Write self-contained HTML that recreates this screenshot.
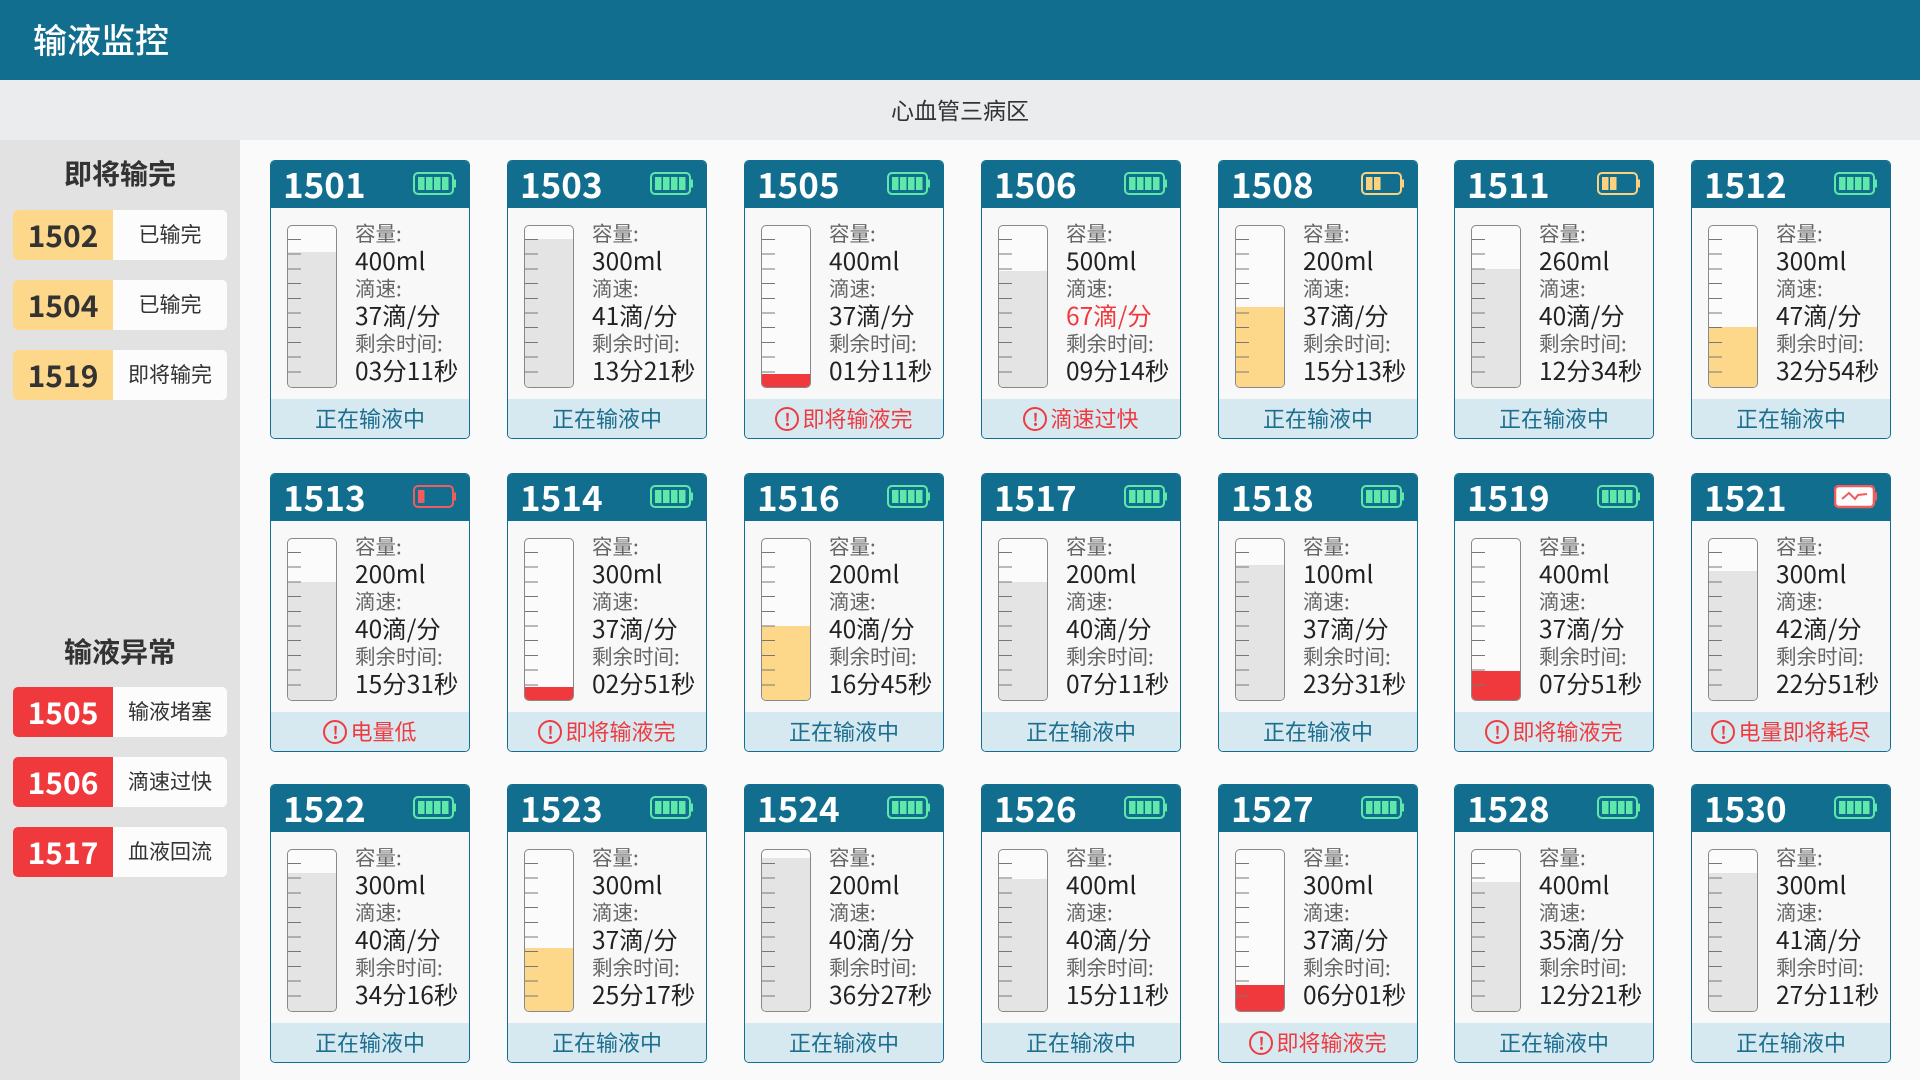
<!DOCTYPE html>
<html><head><meta charset="utf-8"><style>
*{margin:0;padding:0;box-sizing:border-box}
body{width:1920px;height:1080px;overflow:hidden;background:#fafafa;font-family:"Noto Sans CJK SC","Liberation Sans",sans-serif;position:relative}
.top{position:absolute;left:0;top:0;width:1920px;height:80px;background:#126e8f;color:#fff;font-size:34px;line-height:78px;padding-left:33px;font-weight:500}
.sub{position:absolute;left:0;top:80px;width:1920px;height:60px;background:#ebecee;color:#333;font-size:23px;line-height:58px;text-align:center}
.side{position:absolute;left:0;top:140px;width:240px;height:940px;background:#e2e2e2}
.st{position:absolute;left:0;width:240px;text-align:center;font-size:28px;font-weight:bold;color:#333;line-height:40px}
.p{position:absolute;left:13px;width:214px;height:50px;background:#fcfcfc;border-radius:5px;overflow:hidden;font-size:21px;color:#333}
.p b{position:absolute;left:0;top:0;width:100px;height:50px;line-height:48px;text-align:center;font-size:30px}
.p span{position:absolute;left:100px;top:0;width:114px;height:50px;line-height:48px;text-align:center}
.y b{background:#fdd88a;color:#333}.r b{background:#f0393d;color:#fff}
.c{position:absolute;width:200px;height:279px;border:1.5px solid #126e8f;border-radius:5px;background:#f8f8f8;overflow:hidden}
.h{position:absolute;left:0;top:0;width:100%;height:47px;background:#126e8f;color:#fff;font-size:35px;font-weight:bold;line-height:45px;padding-left:12px}
.h svg{position:absolute;left:142px;top:11px}
.t{position:absolute;left:16px;top:64px;width:50px;height:163px;border:1.5px solid #888;border-radius:5px;background:#fbfbfb;overflow:hidden}
.f{position:absolute;left:0;bottom:0;width:100%}
.g{background:#e4e4e4}.yy{background:#fdd88a}.rr{background:#f0393d}
.k{position:absolute;left:0;top:13px;width:13px;height:135px;background:repeating-linear-gradient(to bottom,#777 0,#777 1px,transparent 1px,transparent 14.7px)}
.i{position:absolute;left:84px;top:58px;width:116px}
.i div{height:27.5px;line-height:27.5px;white-space:nowrap}
.l{font-size:20.5px;color:#666}
.v{font-size:24.5px;color:#222}
.v.red{color:#f0393d}
.ft{position:absolute;left:0;bottom:0;width:100%;height:39px;background:#d6e8f0;color:#1b6e8e;font-size:22px;line-height:37px;text-align:center;display:flex;align-items:center;justify-content:center}
.ft.a{color:#ef3b3f}
.ft.a i{display:inline-block;width:24px;height:24px;border:2.5px solid #ef3b3f;border-radius:50%;font-style:normal;font-size:17px;line-height:19px;font-weight:bold;margin-right:3px;text-align:center}
</style></head><body>
<div class="top">输液监控</div>
<div class="sub">心血管三病区</div>
<div class="side">
<div class="st" style="top:13px">即将输完</div>
<div class="p y" style="top:70px"><b>1502</b><span>已输完</span></div>
<div class="p y" style="top:140px"><b>1504</b><span>已输完</span></div>
<div class="p y" style="top:210px"><b>1519</b><span>即将输完</span></div>
<div class="st" style="top:491px">输液异常</div>
<div class="p r" style="top:547px"><b>1505</b><span>输液堵塞</span></div>
<div class="p r" style="top:617px"><b>1506</b><span>滴速过快</span></div>
<div class="p r" style="top:687px"><b>1517</b><span>血液回流</span></div>
</div>

<svg width="0" height="0" style="position:absolute"><defs>
<g id="bg"><rect x="1" y="1" width="39" height="21" rx="4" fill="none" stroke="#5fe9a9" stroke-width="2"/><rect x="40" y="7.5" width="3" height="8" fill="#5fe9a9"/><rect x="5" y="5" width="6.5" height="13" fill="#5fe9a9"/><rect x="13" y="5" width="6.5" height="13" fill="#5fe9a9"/><rect x="21" y="5" width="6.5" height="13" fill="#5fe9a9"/><rect x="29" y="5" width="6.5" height="13" fill="#5fe9a9"/></g>
<g id="by"><rect x="1" y="1" width="39" height="21" rx="4" fill="none" stroke="#fdd27e" stroke-width="2"/><rect x="40" y="7.5" width="3" height="8" fill="#fdd27e"/><rect x="5" y="5" width="6.5" height="13" fill="#fdd27e"/><rect x="13" y="5" width="6.5" height="13" fill="#fdd27e"/></g>
<g id="br"><rect x="1" y="1" width="39" height="21" rx="4" fill="none" stroke="#f25c5c" stroke-width="2"/><rect x="40" y="7.5" width="3" height="8" fill="#f25c5c"/><rect x="5" y="5" width="6.5" height="13" fill="#f25c5c"/></g>
<g id="bw"><rect x="1" y="1" width="39" height="21" rx="4" fill="#fff" stroke="#f25c5c" stroke-width="2.5"/><rect x="40" y="7.5" width="3" height="8" fill="#f25c5c"/><polyline points="8,14 15,8 21,14 24,10 33,9" fill="none" stroke="#f25c5c" stroke-width="2"/></g>
</defs></svg>

<!-- Row 1 -->
<div class="c" style="left:270px;top:160px"><div class="h">1501<svg width="44" height="24"><use href="#bg"/></svg></div><div class="t"><div class="f g" style="height:84%"></div><div class="k"></div></div><div class="i"><div class="l">容量:</div><div class="v">400ml</div><div class="l">滴速:</div><div class="v">37滴/分</div><div class="l">剩余时间:</div><div class="v">03分11秒</div></div><div class="ft">正在输液中</div></div>
<div class="c" style="left:507px;top:160px"><div class="h">1503<svg width="44" height="24"><use href="#bg"/></svg></div><div class="t"><div class="f g" style="height:92%"></div><div class="k"></div></div><div class="i"><div class="l">容量:</div><div class="v">300ml</div><div class="l">滴速:</div><div class="v">41滴/分</div><div class="l">剩余时间:</div><div class="v">13分21秒</div></div><div class="ft">正在输液中</div></div>
<div class="c" style="left:744px;top:160px"><div class="h">1505<svg width="44" height="24"><use href="#bg"/></svg></div><div class="t"><div class="f rr" style="height:8%"></div><div class="k"></div></div><div class="i"><div class="l">容量:</div><div class="v">400ml</div><div class="l">滴速:</div><div class="v">37滴/分</div><div class="l">剩余时间:</div><div class="v">01分11秒</div></div><div class="ft a"><i>!</i>即将输液完</div></div>
<div class="c" style="left:981px;top:160px"><div class="h">1506<svg width="44" height="24"><use href="#bg"/></svg></div><div class="t"><div class="f g" style="height:72%"></div><div class="k"></div></div><div class="i"><div class="l">容量:</div><div class="v">500ml</div><div class="l">滴速:</div><div class="v red">67滴/分</div><div class="l">剩余时间:</div><div class="v">09分14秒</div></div><div class="ft a"><i>!</i>滴速过快</div></div>
<div class="c" style="left:1218px;top:160px"><div class="h">1508<svg width="44" height="24"><use href="#by"/></svg></div><div class="t"><div class="f yy" style="height:50%"></div><div class="k"></div></div><div class="i"><div class="l">容量:</div><div class="v">200ml</div><div class="l">滴速:</div><div class="v">37滴/分</div><div class="l">剩余时间:</div><div class="v">15分13秒</div></div><div class="ft">正在输液中</div></div>
<div class="c" style="left:1454px;top:160px"><div class="h">1511<svg width="44" height="24"><use href="#by"/></svg></div><div class="t"><div class="f g" style="height:73%"></div><div class="k"></div></div><div class="i"><div class="l">容量:</div><div class="v">260ml</div><div class="l">滴速:</div><div class="v">40滴/分</div><div class="l">剩余时间:</div><div class="v">12分34秒</div></div><div class="ft">正在输液中</div></div>
<div class="c" style="left:1691px;top:160px"><div class="h">1512<svg width="44" height="24"><use href="#bg"/></svg></div><div class="t"><div class="f yy" style="height:37%"></div><div class="k"></div></div><div class="i"><div class="l">容量:</div><div class="v">300ml</div><div class="l">滴速:</div><div class="v">47滴/分</div><div class="l">剩余时间:</div><div class="v">32分54秒</div></div><div class="ft">正在输液中</div></div>

<!-- Row 2 -->
<div class="c" style="left:270px;top:473px"><div class="h">1513<svg width="44" height="24"><use href="#br"/></svg></div><div class="t"><div class="f g" style="height:73%"></div><div class="k"></div></div><div class="i"><div class="l">容量:</div><div class="v">200ml</div><div class="l">滴速:</div><div class="v">40滴/分</div><div class="l">剩余时间:</div><div class="v">15分31秒</div></div><div class="ft a"><i>!</i>电量低</div></div>
<div class="c" style="left:507px;top:473px"><div class="h">1514<svg width="44" height="24"><use href="#bg"/></svg></div><div class="t"><div class="f rr" style="height:8%"></div><div class="k"></div></div><div class="i"><div class="l">容量:</div><div class="v">300ml</div><div class="l">滴速:</div><div class="v">37滴/分</div><div class="l">剩余时间:</div><div class="v">02分51秒</div></div><div class="ft a"><i>!</i>即将输液完</div></div>
<div class="c" style="left:744px;top:473px"><div class="h">1516<svg width="44" height="24"><use href="#bg"/></svg></div><div class="t"><div class="f yy" style="height:46%"></div><div class="k"></div></div><div class="i"><div class="l">容量:</div><div class="v">200ml</div><div class="l">滴速:</div><div class="v">40滴/分</div><div class="l">剩余时间:</div><div class="v">16分45秒</div></div><div class="ft">正在输液中</div></div>
<div class="c" style="left:981px;top:473px"><div class="h">1517<svg width="44" height="24"><use href="#bg"/></svg></div><div class="t"><div class="f g" style="height:73%"></div><div class="k"></div></div><div class="i"><div class="l">容量:</div><div class="v">200ml</div><div class="l">滴速:</div><div class="v">40滴/分</div><div class="l">剩余时间:</div><div class="v">07分11秒</div></div><div class="ft">正在输液中</div></div>
<div class="c" style="left:1218px;top:473px"><div class="h">1518<svg width="44" height="24"><use href="#bg"/></svg></div><div class="t"><div class="f g" style="height:84%"></div><div class="k"></div></div><div class="i"><div class="l">容量:</div><div class="v">100ml</div><div class="l">滴速:</div><div class="v">37滴/分</div><div class="l">剩余时间:</div><div class="v">23分31秒</div></div><div class="ft">正在输液中</div></div>
<div class="c" style="left:1454px;top:473px"><div class="h">1519<svg width="44" height="24"><use href="#bg"/></svg></div><div class="t"><div class="f rr" style="height:18%"></div><div class="k"></div></div><div class="i"><div class="l">容量:</div><div class="v">400ml</div><div class="l">滴速:</div><div class="v">37滴/分</div><div class="l">剩余时间:</div><div class="v">07分51秒</div></div><div class="ft a"><i>!</i>即将输液完</div></div>
<div class="c" style="left:1691px;top:473px"><div class="h">1521<svg width="44" height="24"><use href="#bw"/></svg></div><div class="t"><div class="f g" style="height:80%"></div><div class="k"></div></div><div class="i"><div class="l">容量:</div><div class="v">300ml</div><div class="l">滴速:</div><div class="v">42滴/分</div><div class="l">剩余时间:</div><div class="v">22分51秒</div></div><div class="ft a"><i>!</i>电量即将耗尽</div></div>

<!-- Row 3 -->
<div class="c" style="left:270px;top:784px"><div class="h">1522<svg width="44" height="24"><use href="#bg"/></svg></div><div class="t"><div class="f g" style="height:86%"></div><div class="k"></div></div><div class="i"><div class="l">容量:</div><div class="v">300ml</div><div class="l">滴速:</div><div class="v">40滴/分</div><div class="l">剩余时间:</div><div class="v">34分16秒</div></div><div class="ft">正在输液中</div></div>
<div class="c" style="left:507px;top:784px"><div class="h">1523<svg width="44" height="24"><use href="#bg"/></svg></div><div class="t"><div class="f yy" style="height:39%"></div><div class="k"></div></div><div class="i"><div class="l">容量:</div><div class="v">300ml</div><div class="l">滴速:</div><div class="v">37滴/分</div><div class="l">剩余时间:</div><div class="v">25分17秒</div></div><div class="ft">正在输液中</div></div>
<div class="c" style="left:744px;top:784px"><div class="h">1524<svg width="44" height="24"><use href="#bg"/></svg></div><div class="t"><div class="f g" style="height:95%"></div><div class="k"></div></div><div class="i"><div class="l">容量:</div><div class="v">200ml</div><div class="l">滴速:</div><div class="v">40滴/分</div><div class="l">剩余时间:</div><div class="v">36分27秒</div></div><div class="ft">正在输液中</div></div>
<div class="c" style="left:981px;top:784px"><div class="h">1526<svg width="44" height="24"><use href="#bg"/></svg></div><div class="t"><div class="f g" style="height:82%"></div><div class="k"></div></div><div class="i"><div class="l">容量:</div><div class="v">400ml</div><div class="l">滴速:</div><div class="v">40滴/分</div><div class="l">剩余时间:</div><div class="v">15分11秒</div></div><div class="ft">正在输液中</div></div>
<div class="c" style="left:1218px;top:784px"><div class="h">1527<svg width="44" height="24"><use href="#bg"/></svg></div><div class="t"><div class="f rr" style="height:16%"></div><div class="k"></div></div><div class="i"><div class="l">容量:</div><div class="v">300ml</div><div class="l">滴速:</div><div class="v">37滴/分</div><div class="l">剩余时间:</div><div class="v">06分01秒</div></div><div class="ft a"><i>!</i>即将输液完</div></div>
<div class="c" style="left:1454px;top:784px"><div class="h">1528<svg width="44" height="24"><use href="#bg"/></svg></div><div class="t"><div class="f g" style="height:80%"></div><div class="k"></div></div><div class="i"><div class="l">容量:</div><div class="v">400ml</div><div class="l">滴速:</div><div class="v">35滴/分</div><div class="l">剩余时间:</div><div class="v">12分21秒</div></div><div class="ft">正在输液中</div></div>
<div class="c" style="left:1691px;top:784px"><div class="h">1530<svg width="44" height="24"><use href="#bg"/></svg></div><div class="t"><div class="f g" style="height:86%"></div><div class="k"></div></div><div class="i"><div class="l">容量:</div><div class="v">300ml</div><div class="l">滴速:</div><div class="v">41滴/分</div><div class="l">剩余时间:</div><div class="v">27分11秒</div></div><div class="ft">正在输液中</div></div>
</body></html>
